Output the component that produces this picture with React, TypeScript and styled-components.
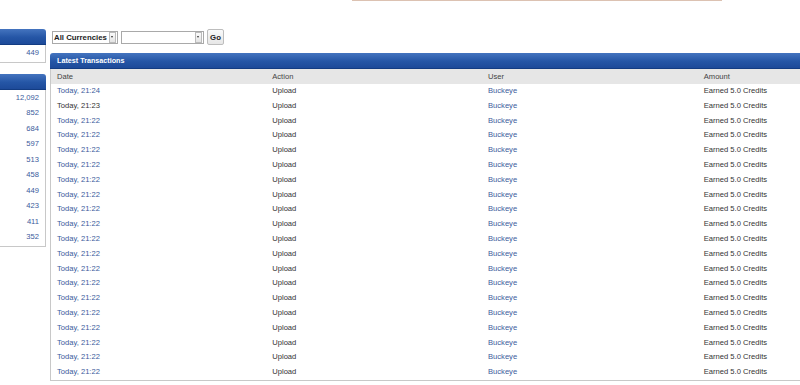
import React from "react";
import styled, { createGlobalStyle } from "styled-components";

const GlobalStyle = createGlobalStyle`
  html, body {
    margin: 0;
    padding: 0;
    background: #fff;
    overflow: hidden;
  }
  body {
    font-family: "Liberation Sans", Arial, sans-serif;
    color: #333;
  }
`;

const sideCounts = ["12,092", "852", "684", "597", "513", "458", "449", "423", "411", "352"];

type Tx = { date: string; dateLink: boolean };
const transactions: Tx[] = [
  { date: "Today, 21:24", dateLink: true },
  { date: "Today, 21:23", dateLink: false },
  ...Array.from({ length: 18 }, () => ({ date: "Today, 21:22", dateLink: true })),
];

const App: React.FC = () => {
  return (
    <Page>
      <GlobalStyle />
      <TopLine />
      <Columns>
        <Sidebar>
          <SidePanel>
            <PanelHead $side />
            <SideBody>
              <SideRow>
                <Link>449</Link>
              </SideRow>
            </SideBody>
          </SidePanel>
          <SidePanel>
            <PanelHead $side />
            <SideBody>
              {sideCounts.map((n, i) => (
                <SideRow key={i}>
                  <Link>{n}</Link>
                </SideRow>
              ))}
            </SideBody>
          </SidePanel>
        </Sidebar>

        <Main>
          <Filters>
            <Select $width={66} $bold>
              <span>All Currencies</span>
              <Arrow />
            </Select>
            <Select $width={83}>
              <span />
              <Arrow />
            </Select>
            <GoButton>Go</GoButton>
          </Filters>

          <Panel>
            <PanelHead>Latest Transactions</PanelHead>
            <Table>
              <thead>
                <tr>
                  <Th>Date</Th>
                  <Th>Action</Th>
                  <Th>User</Th>
                  <Th>Amount</Th>
                </tr>
              </thead>
              <tbody>
                {transactions.map((t, i) => (
                  <tr key={i}>
                    <Td>{t.dateLink ? <Link>{t.date}</Link> : t.date}</Td>
                    <Td>Upload</Td>
                    <Td>
                      <Link>Buckeye</Link>
                    </Td>
                    <Td>Earned 5.0 Credits</Td>
                  </tr>
                ))}
              </tbody>
            </Table>
          </Panel>
        </Main>
      </Columns>
    </Page>
  );
};

export default App;

const Page = styled.div`
  width: 800px;
  height: 385px;
  overflow: hidden;
  display: flex;
  flex-direction: column;
`;

const TopLine = styled.div`
  margin-left: 352px;
  width: 370px;
  height: 1px;
  background: #dcc2b2;
`;

const Columns = styled.div`
  display: flex;
  align-items: flex-start;
  padding-top: 28px;
`;

const Sidebar = styled.div`
  width: 46px;
  flex-shrink: 0;
  display: flex;
  flex-direction: column;
  gap: 11px;
`;

const SidePanel = styled.div`
  display: flex;
  flex-direction: column;
`;

const PanelHead = styled.div<{ $side?: boolean }>`
  height: 15px;
  line-height: 15px;
  padding-left: 7px;
  background: linear-gradient(#4474bf, #2556a6 55%, #1d4a99);
  border-bottom: 1px solid #133c82;
  border-radius: ${(p) => (p.$side ? "0 3px 0 0" : "3px 3px 0 0")};
  color: #fff;
  font-weight: bold;
  font-size: 7.2px;
  box-sizing: content-box;
`;

const SideBody = styled.div`
  border: 1px solid #c8c8c8;
  border-left: none;
  border-top: none;
  padding: 0 0 1px;
`;

const SideRow = styled.div`
  height: 15.5px;
  line-height: 15.5px;
  text-align: right;
  padding-right: 6px;
  font-size: 7.6px;
`;

const Link = styled.span`
  color: #3b5b9c;
`;

const Main = styled.div`
  flex: 1;
  min-width: 0;
  margin-left: 4px;
  overflow: hidden;
  display: flex;
  flex-direction: column;
  gap: 8px;
`;

const Filters = styled.div`
  display: flex;
  align-items: center;
  gap: 3px;
  padding-left: 2px;
  height: 16px;
`;

const Select = styled.div<{ $width: number; $bold?: boolean }>`
  width: ${(p) => p.$width}px;
  height: 13px;
  box-sizing: border-box;
  border: 1px solid #a9a9a9;
  background: #fff;
  display: flex;
  align-items: center;
  justify-content: space-between;
  padding: 0 1px 0 1px;
  font-size: 7.8px;
  font-weight: ${(p) => (p.$bold ? "bold" : "normal")};
  color: #222;
  white-space: nowrap;
`;

const Arrow = styled.span`
  width: 5px;
  height: 9px;
  border: 1px solid #bbb;
  background: linear-gradient(#fafafa, #e4e4e4);
  position: relative;
  &::after {
    content: "";
    position: absolute;
    left: 1px;
    top: 3px;
    border-left: 1.5px solid transparent;
    border-right: 1.5px solid transparent;
    border-top: 2px solid #333;
  }
`;

const GoButton = styled.div`
  height: 16px;
  width: 17px;
  box-sizing: border-box;
  border: 1px solid #bdbdbd;
  border-radius: 2px;
  background: linear-gradient(#fafafa, #e6e6e6);
  display: flex;
  align-items: center;
  justify-content: center;
  font-size: 7.8px;
  font-weight: bold;
  color: #222;
`;

const Panel = styled.div`
  width: 864px;
`;

const Table = styled.table`
  width: 864px;
  table-layout: fixed;
  border-collapse: collapse;
  border: 1px solid #c8c8c8;
  border-top: none;
  font-size: 7.6px;
`;

const Th = styled.th`
  background: #e6e6e6;
  color: #444;
  font-weight: normal;
  text-align: left;
  height: 15px;
  padding: 0 0 0 6px;
  line-height: 15px;
`;

const Td = styled.td`
  height: 14.8px;
  padding: 0 0 0 6px;
  line-height: 14.8px;
  color: #333;
  white-space: nowrap;
`;
